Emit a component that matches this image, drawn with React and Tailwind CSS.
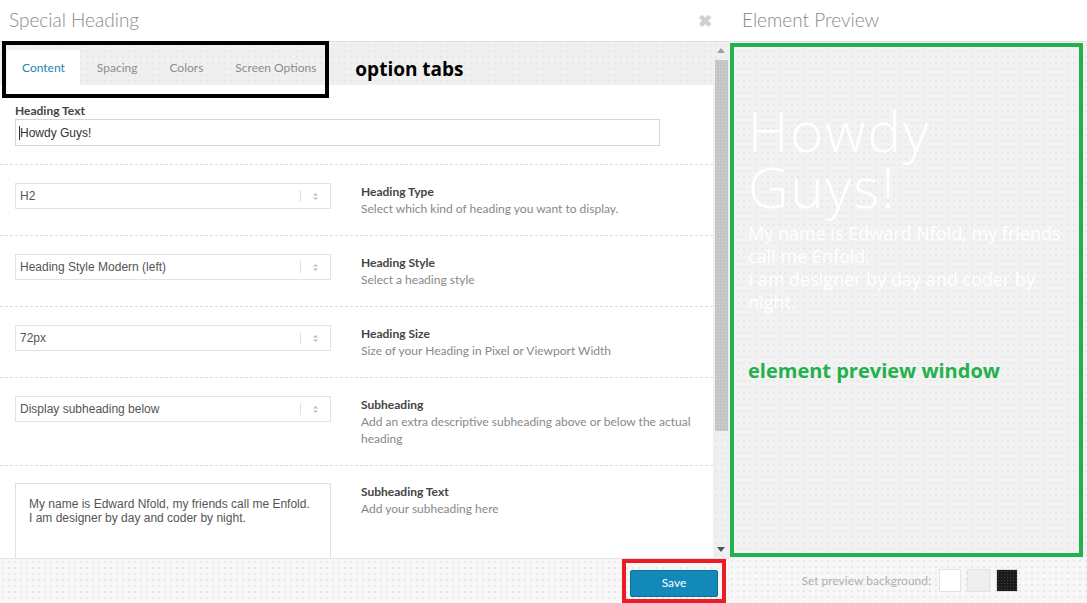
import React from 'react';

const dots = 'bg-[radial-gradient(circle,#e8e8e8_1px,transparent_1px)] bg-[length:6px_6px]';

const rows = [
  { value: 'H2', title: 'Heading Type', desc: 'Select which kind of heading you want to display.' },
  { value: 'Heading Style Modern (left)', title: 'Heading Style', desc: 'Select a heading style' },
  { value: '72px', title: 'Heading Size', desc: 'Size of your Heading in Pixel or Viewport Width' },
  { value: 'Display subheading below', title: 'Subheading', desc: 'Add an extra descriptive subheading above or below the actual heading' },
];

const tabs = ['Content', 'Spacing', 'Colors', 'Screen Options'];

const SelectBox = ({ value }) => (
  <div className="w-[316px] h-[26px] shrink-0 border border-[#e3e3e3] bg-white flex items-center pl-[4px] font-['Liberation_Sans',sans-serif] text-[12px] text-[#555]">
    <span className="flex-1">{value}</span>
    <span className="w-px h-[12px] bg-[#e0e0e0]" />
    <svg width="7" height="9" viewBox="0 0 7 9" className="mx-[11px]">
      <path d="M3.5 1 L6 3.5 H1 Z" fill="#bbb" />
      <path d="M3.5 8 L6 5.5 H1 Z" fill="#bbb" />
    </svg>
  </div>
);

const RowText = ({ title, desc }) => (
  <div className="flex-1 pr-[20px] font-['Lato',sans-serif] text-[12px] leading-[17px]">
    <div className="font-bold text-[#444]">{title}</div>
    <div className="text-[#888]">{desc}</div>
  </div>
);

export default function App() {
  return (
    <div className="w-[1087px] h-[603px] flex bg-white overflow-hidden relative font-['Lato',sans-serif]">
      {/* editor column */}
      <div className="w-[729px] flex flex-col">
        <div className="h-[42px] shrink-0 border-b border-[#e1e1e1] flex items-center justify-between pl-[9px] pr-[17px]">
          <span className="text-[19px] font-light text-[#8a8a8a]">Special Heading</span>
          <span className="text-[17px] font-bold text-[#d0d0d0] leading-none">✖</span>
        </div>
        <div className="flex-1 flex min-h-0">
          <div className="w-[713px] flex flex-col overflow-hidden">
            <div className={`h-[43px] shrink-0 bg-[#f0f0f0] ${dots} flex items-end pl-[7px]`}>
              {tabs.map((t, i) => (
                <div
                  key={t}
                  className={
                    i === 0
                      ? 'h-[35px] px-[15px] flex items-center bg-white text-[12px] text-[#2484ac] mr-[2px]'
                      : 'h-[35px] px-[15px] flex items-center text-[12px] text-[#8c8c8c] mr-[2px]'
                  }
                >
                  {t}
                </div>
              ))}
              <div className="self-center ml-[22px] mt-[12px] font-['Open_Sans',sans-serif] font-bold text-[19px] text-black">option tabs</div>
            </div>
            <div className="pt-[17px] pl-[15px] pb-[18px] border-b border-dashed border-[#dcdcdc]">
              <div className="text-[12px] leading-[17px] font-bold text-[#444]">Heading Text</div>
              <div className="w-[645px] h-[27px] border border-[#d5d5d5] flex items-center pl-[3px] font-['Liberation_Sans',sans-serif] text-[12px] text-[#333]">
                <span className="w-px h-[14px] bg-[#333]" />
                <span>Howdy Guys!</span>
              </div>
            </div>
            {rows.map((r) => (
              <div key={r.title} className="flex items-start gap-[30px] pl-[15px] pt-[18px] pb-[18px] border-b border-dashed border-[#dcdcdc]">
                <SelectBox value={r.value} />
                <RowText title={r.title} desc={r.desc} />
              </div>
            ))}
            <div className="flex items-start gap-[30px] pl-[15px] pt-[17px]">
              <div className="w-[316px] h-[110px] shrink-0 border border-[#e0e0e0] px-[13px] pt-[13px] font-['Liberation_Sans',sans-serif] text-[12px] leading-[14px] text-[#555]">
                My name is Edward Nfold, my friends call me Enfold.
                <br />I am designer by day and coder by night.
              </div>
              <RowText title="Subheading Text" desc="Add your subheading here" />
            </div>
          </div>
          {/* scrollbar */}
          <div className={`w-[16px] bg-[#f0f0f0] ${dots} flex flex-col items-center`}>
            <svg width="8" height="5" viewBox="0 0 8 5" className="mt-[6px]"><path d="M4 0 L8 5 H0 Z" fill="#a0a0a0" /></svg>
            <div className="w-[13px] h-[371px] mt-[7px] ml-[1px] bg-[#c4c4c4] bg-[radial-gradient(circle,#d6d6d6_1px,transparent_1px)] bg-[length:3px_3px]" />
            <div className="flex-1" />
            <svg width="8" height="5" viewBox="0 0 8 5" className="mb-[6px]"><path d="M0 0 H8 L4 5 Z" fill="#555" /></svg>
          </div>
        </div>
        <div className={`h-[45px] shrink-0 border-t border-[#e3e3e3] bg-[#f7f7f7] ${dots} flex justify-end pr-[3px]`}>
          <div className="border-4 border-[#ed1c24] pt-[6px] pb-[4px] px-[4px]">
            <button className="w-[88px] h-[27px] bg-[#1289b8] border border-[#0e6f96] text-white text-[12px] rounded-[2px]">Save</button>
          </div>
        </div>
      </div>

      {/* preview column */}
      <div className="flex-1 flex flex-col">
        <div className="h-[42px] shrink-0 border-b border-[#e1e1e1] flex items-center pl-[13px]">
          <span className="text-[19px] font-light text-[#8a8a8a]">Element Preview</span>
        </div>
        <div className={`flex-1 bg-[#f2f2f2] ${dots} pl-[1px] pr-[4px] py-[1px] flex`}>
          <div className="flex-1 border-4 border-[#22b14c] pl-[14px] pt-[55px]">
            <div className="font-['Open_Sans',sans-serif] font-light text-[56px] leading-[56px] tracking-[2px] text-white">
              Howdy
              <br />
              Guys!
            </div>
            <div className="w-[325px] mt-[8px] font-['Open_Sans',sans-serif] text-[18px] leading-[23px] text-white">
              My name is Edward Nfold, my friends call me Enfold.
              <br />I am designer by day and coder by night.
            </div>
            <div className="mt-[42px] font-['Open_Sans',sans-serif] font-bold text-[20px] text-[#22b14c]">element preview window</div>
          </div>
        </div>
        <div className={`h-[45px] shrink-0 bg-[#f7f7f7] ${dots} flex items-center justify-end gap-[6px] pr-[69px]`}>
          <span className="text-[12px] text-[#b0b0b0] mr-[2px]">Set preview background:</span>
          <span className="w-[22px] h-[23px] bg-white border border-[#e3e3e3]" />
          <span className="w-[23px] h-[23px] bg-[#efefef] border border-[#e3e3e3]" />
          <span className="w-[22px] h-[23px] bg-[#1a1a1a] bg-[radial-gradient(circle,#444_1px,transparent_1px)] bg-[length:3px_3px] border border-[#ddd]" />
        </div>
      </div>

      {/* annotation box around tabs */}
      <div className="absolute left-[2px] top-[41px] w-[327px] h-[57px] border-4 border-black pointer-events-none" />
    </div>
  );
}
